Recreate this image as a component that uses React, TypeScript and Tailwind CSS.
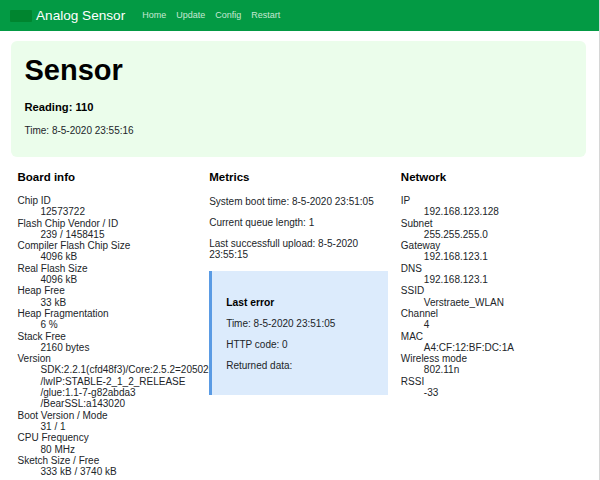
import React from "react";

const board: [string, string[]][] = [
  ["Chip ID", ["12573722"]],
  ["Flash Chip Vendor / ID", ["239 / 1458415"]],
  ["Compiler Flash Chip Size", ["4096 kB"]],
  ["Real Flash Size", ["4096 kB"]],
  ["Heap Free", ["33 kB"]],
  ["Heap Fragmentation", ["6 %"]],
  ["Stack Free", ["2160 bytes"]],
  [
    "Version",
    [
      "SDK:2.2.1(cfd48f3)/Core:2.5.2=20502000",
      "/lwIP:STABLE-2_1_2_RELEASE",
      "/glue:1.1-7-g82abda3",
      "/BearSSL:a143020",
    ],
  ],
  ["Boot Version / Mode", ["31 / 1"]],
  ["CPU Frequency", ["80 MHz"]],
  ["Sketch Size / Free", ["333 kB / 3740 kB"]],
];

const network: [string, string][] = [
  ["IP", "192.168.123.128"],
  ["Subnet", "255.255.255.0"],
  ["Gateway", "192.168.123.1"],
  ["DNS", "192.168.123.1"],
  ["SSID", "Verstraete_WLAN"],
  ["Channel", "4"],
  ["MAC", "A4:CF:12:BF:DC:1A"],
  ["Wireless mode", "802.11n"],
  ["RSSI", "-33"],
];

export default function App() {
  return (
    <div
      className="w-[600px] h-[480px] overflow-hidden bg-white border-r border-[#d6d6d6] text-[#212529]"
      style={{ fontFamily: '"Liberation Sans", Arial, sans-serif' }}
    >
      <nav className="h-[31px] bg-[#039a44] flex items-center pl-[10px]">
        <div className="w-[22px] h-[12px] bg-[#00852f] rounded-[1px] mr-[4px] mt-[1px]" />
        <span className="text-white text-[13.6px] leading-none">Analog Sensor</span>
        <div className="flex items-center gap-[10px] ml-[17px] text-[9px] text-[#c6e8d3]">
          <span>Home</span>
          <span>Update</span>
          <span>Config</span>
          <span>Restart</span>
        </div>
      </nav>

      <div className="mx-[11px] w-[575px]">
        <div className="mt-[10px] h-[116px] rounded-[6px] bg-[#ebfdeb] pl-[13.5px] pt-[12px]">
          <h1 className="text-[29px] leading-[34px] font-bold text-black">Sensor</h1>
          <p className="mt-[14px] text-[11.2px] leading-[13px] font-bold text-black">Reading: 110</p>
          <p className="mt-[11px] text-[10px] leading-[11.5px]">Time: 8-5-2020 23:55:16</p>
        </div>

        <div className="grid grid-cols-3 mt-[14px]">
          <div className="px-[6.5px] relative z-0 whitespace-nowrap">
            <h4 className="text-[11.5px] leading-[13px] font-bold text-black">Board info</h4>
            <dl className="mt-[11px] text-[10px] leading-[11.3px]">
              {board.map(([k, vs]) => (
                <React.Fragment key={k}>
                  <dt>{k}</dt>
                  {vs.map((v) => (
                    <dd key={v} className="ml-[23px]">
                      {v}
                    </dd>
                  ))}
                </React.Fragment>
              ))}
            </dl>
          </div>

          <div className="px-[6.5px] relative z-10">
            <h4 className="text-[11.5px] leading-[13px] font-bold text-black">Metrics</h4>
            <div className="mt-[12px] text-[10px] leading-[11.3px] flex flex-col gap-[9.7px]">
              <p>System boot time: 8-5-2020 23:51:05</p>
              <p>Current queue length: 1</p>
              <p>Last successfull upload: 8-5-2020 23:55:15</p>
            </div>
            <div className="mt-[10px] h-[124px] bg-[#dcebfc] border-l-[3px] border-[#5a9be4] pl-[14px] pt-[26px] text-[10px] leading-[11.3px] flex flex-col gap-[9.7px]">
              <p className="font-bold text-black text-[10.3px]">Last error</p>
              <p>Time: 8-5-2020 23:51:05</p>
              <p>HTTP code: 0</p>
              <p>Returned data:</p>
            </div>
          </div>

          <div className="px-[6.5px]">
            <h4 className="text-[11.5px] leading-[13px] font-bold text-black">Network</h4>
            <dl className="mt-[11px] text-[10px] leading-[11.3px]">
              {network.map(([k, v]) => (
                <React.Fragment key={k}>
                  <dt>{k}</dt>
                  <dd className="ml-[23px]">{v}</dd>
                </React.Fragment>
              ))}
            </dl>
          </div>
        </div>
      </div>
    </div>
  );
}
